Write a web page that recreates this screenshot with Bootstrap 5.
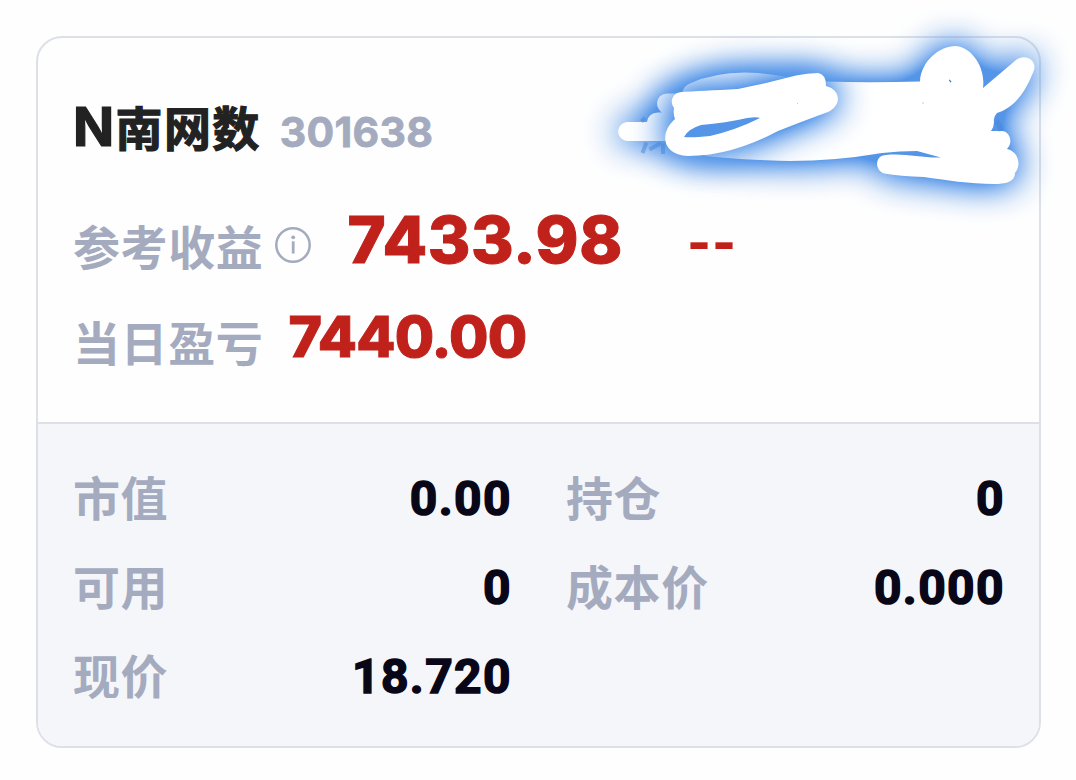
<!DOCTYPE html>
<html lang="zh-CN">
<head>
    <meta charset="UTF-8">
    <meta name="viewport" content="width=device-width, initial-scale=1.0">
    <title>持仓详情 - 南网数</title>
    <!-- Bootstrap CSS -->
    <link href="https://cdn.jsdelivr.net/npm/bootstrap@5.3.0/dist/css/bootstrap.min.css" rel="stylesheet">
    <style>
        body {
            background: #fefefe;
            font-family: Inter, "Noto Sans CJK SC", sans-serif;
            font-weight: 700;
            overflow: hidden;
        }
        .holding {
            width: 1005px;
            height: 712px;
            margin: 36px 0 0 36px;
            border: 2px solid #dde1e7;
            border-radius: 26px;
            background: #fefefe;
        }
        .summary {
            height: 386px;
            padding: 39px 35px 0;
            border-bottom: 2px solid #dde1e7;
        }
        .summary > div { white-space: nowrap; }
        .line-title { height: 106px; line-height: 100px; }
        .line-profit { height: 116px; line-height: 118px; }
        .line-day { height: 84px; line-height: 84px; }
        .stock-name { font-size: 47px; letter-spacing: 1.4px; color: #222; -webkit-text-stroke: 1.2px #222; }
        .stock-name .prefix { font-size: 54px; }
        .stock-code { font-size: 41px; letter-spacing: 0.3px; color: #a5abbf; margin-left: 19px; -webkit-text-stroke: .8px #a5abbf; transform: translateY(1px); }
        .caption-text { font-size: 47px; letter-spacing: 0.6px; color: #a5abbf; }
        .red { color: #c0211b; font-weight: 800; -webkit-text-stroke: 1px #c0211b; }
        .num-lg { font-size: 65px; letter-spacing: .6px; transform: translateY(-2px); }
        .num-md { font-size: 57px; letter-spacing: -0.8px; transform: translateY(-4px); }
        .dashes { font-size: 51px; letter-spacing: 1px; -webkit-text-stroke: 0; transform: translateY(-4px); }
        .info-icon { width: 36px; height: 36px; transform: translateY(4px); }
        .details {
            padding: 30px 35px 0;
            background: #f5f6fa;
            border-radius: 0 0 24px 24px;
            height: 322px;
        }
        .details .row { --bs-gutter-x: 55px; }
        .item { height: 89px; line-height: 89px; }
        .value { font-family: Roboto, sans-serif; font-size: 48px; letter-spacing: 1.4px; margin-right: -1px; transform: translateY(-1px); -webkit-text-stroke: 1.5px #090717; color: #090717; }
        .scribble { top: 0; left: 0; pointer-events: none; }
    </style>
</head>
<body>
<div class="card holding">
    <!-- Profit summary -->
    <div class="summary">
        <div class="line-title d-flex align-items-baseline">
            <span class="stock-name"><span class="prefix">N</span>南网数</span>
            <span class="stock-code">301638</span>
        </div>
        <div class="line-profit d-flex align-items-baseline">
            <span class="caption-text">参考收益</span>
            <svg class="info-icon align-self-center" style="margin-left: 12px" viewBox="0 0 36 36" fill="none" stroke="#a5abbf">
                <circle cx="18" cy="18" r="16.7" stroke-width="2.5"/>
                <path d="M18.2 14.3V26.5" stroke-width="2.8"/>
                <circle cx="18.2" cy="10.3" r="1.9" fill="#a5abbf" stroke="none"/>
            </svg>
            <span class="num-lg red" style="margin-left: 36px">7433.98</span>
            <span class="dashes red" style="margin-left: 64px">--</span>
        </div>
        <div class="line-day d-flex align-items-baseline">
            <span class="caption-text">当日盈亏</span>
            <span class="num-md red" style="margin-left: 25px">7440.00</span>
        </div>
    </div>

    <!-- Position details -->
    <div class="details">
        <div class="row">
            <div class="col-6 item d-flex justify-content-between align-items-baseline">
                <span class="caption-text">市值</span>
                <span class="value">0.00</span>
            </div>
            <div class="col-6 item d-flex justify-content-between align-items-baseline">
                <span class="caption-text">持仓</span>
                <span class="value">0</span>
            </div>
            <div class="col-6 item d-flex justify-content-between align-items-baseline">
                <span class="caption-text">可用</span>
                <span class="value">0</span>
            </div>
            <div class="col-6 item d-flex justify-content-between align-items-baseline">
                <span class="caption-text">成本价</span>
                <span class="value">0.000</span>
            </div>
            <div class="col-6 item d-flex justify-content-between align-items-baseline">
                <span class="caption-text">现价</span>
                <span class="value">18.720</span>
            </div>
        </div>
    </div>
</div>

<!-- Glowing brush marks over the corner of the card -->
<svg class="scribble position-absolute" width="1076" height="260" viewBox="0 0 1076 260">
    <defs>
        <filter id="glow" filterUnits="userSpaceOnUse" x="540" y="-60" width="640" height="340" color-interpolation-filters="sRGB">
            <feGaussianBlur in="SourceAlpha" stdDeviation="18" result="soft"/>
            <feComponentTransfer in="soft" result="strong">
                <feFuncA type="linear" slope="1.9"/>
            </feComponentTransfer>
            <feFlood flood-color="#5495e8"/>
            <feComposite in2="strong" operator="in" result="halo"/>
            <feMerge>
                <feMergeNode in="halo"/>
                <feMergeNode in="SourceGraphic"/>
            </feMerge>
        </filter>
    </defs>
    <g filter="url(#glow)" fill="#fff">
        <path d="M628 122H647Q648 113 658 112.500H662Q657 109 657 103Q658 94 667 93.500H682Q684 85 691 83Q713 73 745 72.500Q772 73 795 79Q810 81.500 826 81.500Q870 83 920 81.500C921 60 941 46 955 46C970 46 986 66 983 88L1016 60C1025 53 1037 60 1034 70C1027 88 1017 107 997 113Q993 117 994 122Q994 127 991 131H1002C1009 131 1014 142 1007 149C1018 151 1022 165 1015 173C1015 182 1005 184 994 184C970 184 945 180 924 177Q900 176 884 173.500C874 170 875 155 886 155C905 153 920 158 941 157.500L917 151Q900 151 882 153Q835 161 790 161Q740 160 706 156L670 141H628C615 140 615 123 628 122Z"/>
    </g>
    <g filter="url(#glow)" fill="#fff">
        <path fill-rule="evenodd" d="M681 92Q701 91 738 89Q768 83 796 75.500Q807 73 818 73Q826 74 826 86C841 90 842 105 828 112Q806 120 778 131Q731 156 688 156C662 155 659 133 675 119Q673 114 674 108C669 101 673 93 681 92ZM684 137Q692 138 710 136Q736 130 760 118Q757 116.500 747 118Q726 123 701 125Q688 129 684 137Z"/>
    </g>
    <g stroke="#4683d4" stroke-width="4" fill="none" opacity=".5">
        <path d="M641.500 121.500L645 118M642.500 153L646.500 142.500M649.500 149.500L661 143M663 143.500V154"/>
        <path d="M996 121Q1000 125 1001 131" stroke-width="5"/>
    </g>
    <path d="M949 80h1v2h1v-1h-1z" fill="#3f78c5" stroke="#3f78c5" stroke-width=".6"/>
    <path d="M922 103h2M797 103.500h1" stroke="#b9cdea"/>
</svg>

<!-- Bootstrap JS -->
<script src="https://cdn.jsdelivr.net/npm/bootstrap@5.3.0/dist/js/bootstrap.bundle.min.js"></script>
</body>
</html>
